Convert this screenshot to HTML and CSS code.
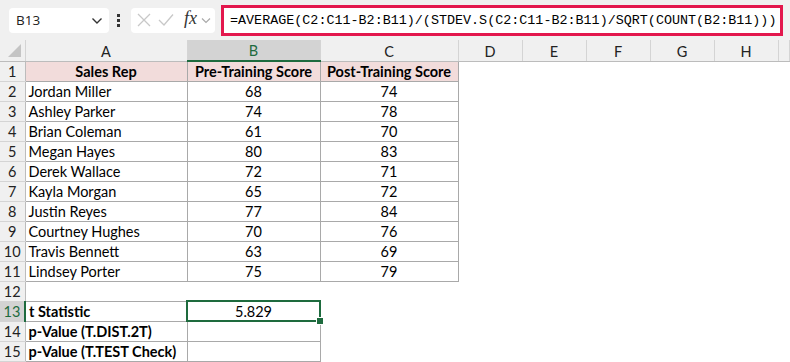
FILE: index.html
```html
<!DOCTYPE html>
<html lang="en">
<head>
    <meta charset="UTF-8">
    <title>t Statistic</title>
    <link rel="stylesheet" href="styles.css">
</head>
<body>
    <div class="toolbar">
        <div class="namebox">
            <span>B13</span>
            <svg class="chev" width="12" height="8" viewBox="0 0 12 8"><path d="M1.5 1.5 L6 6 L10.5 1.5" fill="none" stroke="#333" stroke-width="1.4"/></svg>
        </div>
        <div class="dots"><i></i><i></i><i></i></div>
        <div class="fxbox">
            <svg width="14" height="14" viewBox="0 0 14 14"><path d="M1 1 L13 13 M13 1 L1 13" stroke="#c8c8c8" stroke-width="1.3"/></svg>
            <svg width="16" height="14" viewBox="0 0 16 14"><path d="M1 7 L6 12 L15 1.5" fill="none" stroke="#c8c8c8" stroke-width="1.3"/></svg>
            <span class="fx">fx</span>
            <svg width="10" height="7" viewBox="0 0 10 7"><path d="M1 1.5 L5 5.5 L9 1.5" fill="none" stroke="#aaa" stroke-width="1.2"/></svg>
        </div>
        <div class="formula">=AVERAGE(C2:C11-B2:B11)/(STDEV.S(C2:C11-B2:B11)/SQRT(COUNT(B2:B11)))</div>
    </div>

    <table class="sheet">
        <colgroup>
            <col style="width:25px"><col style="width:162px"><col style="width:133px"><col style="width:138px">
            <col style="width:64px"><col style="width:64px"><col style="width:64px"><col style="width:64px"><col style="width:64px"><col>
        </colgroup>
        <tr class="colhead">
            <th class="corner"><span></span></th><th>A</th><th class="active">B</th><th>C</th><th>D</th><th>E</th><th>F</th><th>G</th><th>H</th><th></th>
        </tr>
        <tr><th class="rh">1</th><td class="t hd">Sales Rep</td><td class="t hd">Pre-Training Score</td><td class="t hd">Post-Training Score</td><td colspan="6"></td></tr>
        <tr><th class="rh">2</th><td class="t">Jordan Miller</td><td class="t num">68</td><td class="t num">74</td><td colspan="6"></td></tr>
        <tr><th class="rh">3</th><td class="t">Ashley Parker</td><td class="t num">74</td><td class="t num">78</td><td colspan="6"></td></tr>
        <tr><th class="rh">4</th><td class="t">Brian Coleman</td><td class="t num">61</td><td class="t num">70</td><td colspan="6"></td></tr>
        <tr><th class="rh">5</th><td class="t">Megan Hayes</td><td class="t num">80</td><td class="t num">83</td><td colspan="6"></td></tr>
        <tr><th class="rh">6</th><td class="t">Derek Wallace</td><td class="t num">72</td><td class="t num">71</td><td colspan="6"></td></tr>
        <tr><th class="rh">7</th><td class="t">Kayla Morgan</td><td class="t num">65</td><td class="t num">72</td><td colspan="6"></td></tr>
        <tr><th class="rh">8</th><td class="t">Justin Reyes</td><td class="t num">77</td><td class="t num">84</td><td colspan="6"></td></tr>
        <tr><th class="rh">9</th><td class="t">Courtney Hughes</td><td class="t num">70</td><td class="t num">76</td><td colspan="6"></td></tr>
        <tr><th class="rh">10</th><td class="t">Travis Bennett</td><td class="t num">63</td><td class="t num">69</td><td colspan="6"></td></tr>
        <tr><th class="rh">11</th><td class="t">Lindsey Porter</td><td class="t num">75</td><td class="t num">79</td><td colspan="6"></td></tr>
        <tr><th class="rh">12</th><td></td><td></td><td colspan="7"></td></tr>
        <tr><th class="rh active">13</th><td class="t b">t Statistic</td><td class="t num sel">5.829<span class="handle"></span></td><td colspan="7"></td></tr>
        <tr><th class="rh">14</th><td class="t b">p-Value (T.DIST.2T)</td><td class="t"></td><td colspan="7"></td></tr>
        <tr><th class="rh">15</th><td class="t b">p-Value (T.TEST Check)</td><td class="t"></td><td colspan="7"></td></tr>
    </table>
</body>
</html>
```

FILE: styles.css
```css
body {
    margin: 0;
    width: 790px;
    height: 362px;
    overflow: hidden;
    background: #ffffff;
    font-family: Lato, "Open Sans", sans-serif;
}
.toolbar {
    height: 40px;
    background: #f0f0f0;
    display: flex;
    align-items: center;
    box-sizing: border-box;
    padding-left: 9px;
}
.namebox {
    width: 100px;
    height: 25px;
    background: #fff;
    border-radius: 4px;
    box-sizing: border-box;
    display: flex;
    align-items: center;
    justify-content: space-between;
    padding: 0 6px 0 7px;
    font-family: "Open Sans", sans-serif;
    font-size: 13.5px;
    color: #222;
}
.chev {
    margin-top: 1px;
}
.dots {
    width: 22px;
    display: flex;
    flex-direction: column;
    align-items: center;
    gap: 2px;
    margin-left: -2px;
}
.dots i {
    display: block;
    width: 3px;
    height: 3px;
    background: #333;
}
.fxbox {
    width: 84px;
    height: 25px;
    margin-left: 2px;
    background: #fff;
    border-radius: 4px;
    display: flex;
    align-items: center;
    gap: 7px;
    padding-left: 6px;
    box-sizing: border-box;
}
.fx {
    font-family: "Liberation Serif", serif;
    font-style: italic;
    font-size: 18px;
    color: #333;
    margin-top: -3px;
    margin-left: 3px;
    margin-right: -3px;
}
.formula {
    margin-left: 6px;
    width: 562px;
    height: 31px;
    box-sizing: border-box;
    border: 3px solid #e3174d;
    background: #fff;
    font-family: "Liberation Mono", monospace;
    font-size: 13.4px;
    line-height: 25px;
    padding-left: 6px;
    color: #000;
    white-space: nowrap;
}
.sheet {
    border-collapse: collapse;
    table-layout: fixed;
    width: 790px;
    font-size: 14.5px;
}
.sheet th, .sheet td {
    height: 20px;
    padding: 0;
    box-sizing: border-box;
    white-space: nowrap;
    overflow: visible;
}
.colhead th {
    height: 21px;
    background: #f0f0f0;
    border-right: 1px solid #d4d4d4;
    border-bottom: 1px solid #bcbcbc;
    font-weight: normal;
    color: #222;
    font-size: 14.5px;
    text-align: center;
    vertical-align: bottom;
    padding-bottom: 1px;
}
.colhead th.active {
    background: #d3d3d3;
    color: #1e6b3e;
    border-bottom: 2px solid #1e6b3e;
}
.corner {
    position: relative;
}
.corner span {
    position: absolute;
    right: 4px;
    bottom: 4px;
    width: 0;
    height: 0;
    border-left: 13px solid transparent;
    border-bottom: 13px solid #c4c4c4;
}
.rh {
    background: #f0f0f0;
    border-right: 1px solid #bcbcbc;
    border-bottom: 1px solid #d4d4d4;
    font-weight: normal;
    color: #222;
    text-align: center;
}
.rh.active {
    background: #d3d3d3;
    color: #1e6b3e;
    border-right: 2px solid #1e6b3e;
}
.sheet td.t {
    border: 1px solid #a9a9a9;
    padding-left: 3px;
    color: #000;
}
.sheet td.hd {
    background: #f2dcdb;
    font-weight: bold;
    text-align: center;
    padding-left: 0;
}
.sheet td.num {
    text-align: center;
    padding-left: 0;
}
.b {
    font-weight: bold;
}
.sel {
    position: relative;
    outline: 2px solid #1e6b3e;
    outline-offset: -1px;
}
.handle {
    position: absolute;
    right: -4px;
    bottom: -4px;
    width: 6px;
    height: 6px;
    background: #1e6b3e;
    border: 1px solid #fff;
}
```
